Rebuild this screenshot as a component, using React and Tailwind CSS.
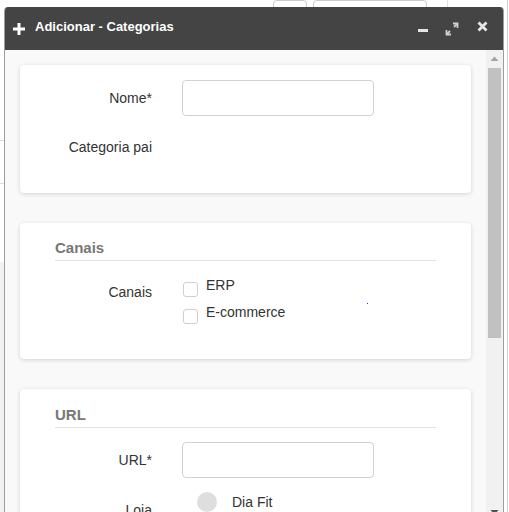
import React from 'react'

const font = { fontFamily: '"Liberation Sans", Arial, sans-serif' }

function FieldRow({ label, children, className = '', labelClass = '' }) {
  return (
    <div className={`flex ${className}`}>
      <div className={`w-[132px] text-right text-[14px] leading-[20px] text-[#333] ${labelClass}`}>{label}</div>
      <div className="ml-[30px]">{children}</div>
    </div>
  )
}

function TextInput() {
  return <div className="w-[192px] h-[36px] rounded-[4px] border border-[#cdd2da] bg-white" />
}

function Checkbox({ label }) {
  return (
    <div className="flex items-start h-[27px]">
      <span className="mt-[6px] ml-[1px] w-[15px] h-[15px] rounded-[3px] border border-[#cfcfcf] bg-white" />
      <span className="ml-[8px] text-[14px] leading-[20px] text-[#333] -mt-[1px]">{label}</span>
    </div>
  )
}

function SectionTitle({ children }) {
  return (
    <div className="mx-[35px] pb-[2px] border-b border-[#e2e2e2] text-[15px] leading-[20px] font-bold text-[#777]">
      {children}
    </div>
  )
}

function Card({ children, className = '' }) {
  return (
    <div className={`bg-white rounded-[4px] shadow-[0_1px_4px_rgba(0,0,0,0.16)] ${className}`}>
      {children}
    </div>
  )
}

function Scrollbar() {
  return (
    <div className="w-[17px] bg-[#f1f1f1] flex flex-col items-center">
      <svg width="9" height="6" viewBox="0 0 9 6" className="mt-[6px]">
        <polygon points="4.5,0.5 8.5,5 0.5,5" fill="#a3a3a3" />
      </svg>
      <div className="mt-[6px] w-[13px] h-[270px] bg-[#c1c1c1]" />
      <div className="flex-1" />
      <svg width="9" height="6" viewBox="0 0 9 6" className="mb-[12px]">
        <polygon points="0.5,1 8.5,1 4.5,5.5" fill="#505050" />
      </svg>
    </div>
  )
}

export default function App() {
  return (
    <div className="relative w-[509px] h-[512px] overflow-hidden bg-white" style={font}>
      {/* page behind the dialog */}
      <div className="absolute left-[273px] top-0 w-[34px] h-[30px] rounded-[4px] border border-[#cccccc]" />
      <div className="absolute left-[313px] top-0 w-[114px] h-[30px] rounded-[4px] border border-[#cccccc]" />
      <div className="absolute left-[447px] top-0 w-px h-[8px] bg-[#e0e0e0]" />
      <div className="absolute left-0 top-[140px] w-[4px] h-px bg-[#dddddd]" />
      <div className="absolute left-0 top-[183px] w-[4px] h-px bg-[#dddddd]" />
      <div className="absolute left-0 top-[262px] w-[4px] h-[250px] bg-[#f2f2f2]" />
      <div className="absolute left-[507px] top-0 w-px h-[512px] bg-[#d0d0d0]" />

      {/* dialog window */}
      <div className="absolute left-[4px] top-[7px] w-[500px] h-[520px] flex flex-col border-x border-[#9d9d9d] rounded-t-[4px] overflow-hidden">
        <div className="h-[43px] bg-[#444444] flex items-center pl-[8px] pr-[15px] shrink-0">
          <svg width="12" height="12" viewBox="0 0 12 12">
            <rect x="4.5" y="0" width="3" height="12" fill="#fff" />
            <rect x="0" y="4.5" width="12" height="3" fill="#fff" />
          </svg>
          <span className="ml-[10px] text-[13px] font-bold text-white leading-[16px] -mt-[4px]">Adicionar - Categorias</span>
          <div className="flex-1" />
          <svg width="10" height="10" viewBox="0 0 10 10">
            <rect x="0" y="5" width="10" height="3" fill="#e6e6e6" />
          </svg>
          <svg width="14" height="14" viewBox="0 0 14 14" className="ml-[17px]">
            <path d="M8 1.5H12.5V6" fill="none" stroke="#cfcfcf" strokeWidth="1.8" />
            <path d="M12.5 1.5L9 5" stroke="#cfcfcf" strokeWidth="1.8" />
            <path d="M6 12.5H1.5V8" fill="none" stroke="#cfcfcf" strokeWidth="1.8" />
            <path d="M1.5 12.5L5 9" stroke="#cfcfcf" strokeWidth="1.8" />
          </svg>
          <svg width="11" height="11" viewBox="0 0 11 11" className="ml-[18px] -mt-[4px]">
            <path d="M1.5 1.5L9.5 9.5M9.5 1.5L1.5 9.5" stroke="#e6e6e6" strokeWidth="2.8" />
          </svg>
        </div>

        <div className="flex flex-1 bg-[#f9f9f9] min-h-0">
          <div className="flex-1 overflow-hidden px-[15px] pt-[15px]">
            <Card className="pt-[15px] pb-[28px]">
              <FieldRow label="Nome*" labelClass="pt-[8px]">
                <TextInput />
              </FieldRow>
              <FieldRow label="Categoria pai" className="mt-[13px] h-[36px]" labelClass="pt-[8px]" />
            </Card>

            <Card className="mt-[30px] pt-[15px] pb-[29px]">
              <SectionTitle>Canais</SectionTitle>
              <div className="relative">
                <FieldRow label="Canais" className="mt-[15px]" labelClass="pt-[6px]">
                  <Checkbox label="ERP" />
                  <Checkbox label="E-commerce" />
                </FieldRow>
                <span className="absolute left-[347px] top-[27px] w-px h-px bg-[#3030ff]" />
              </div>
            </Card>

            <Card className="mt-[30px] pt-[16px] pb-[20px]">
              <SectionTitle>URL</SectionTitle>
              <FieldRow label="URL*" className="mt-[14px]" labelClass="pt-[8px]">
                <TextInput />
              </FieldRow>
              <FieldRow label="Loja" className="mt-[14px]" labelClass="pt-[8px]">
                <div className="flex items-center ml-[15px]">
                  <span className="w-[20px] h-[20px] rounded-full bg-[#dedede]" />
                  <span className="ml-[15px] text-[14px] leading-[20px] text-[#333]">Dia Fit</span>
                </div>
              </FieldRow>
            </Card>
          </div>
          <Scrollbar />
        </div>
      </div>
    </div>
  )
}
